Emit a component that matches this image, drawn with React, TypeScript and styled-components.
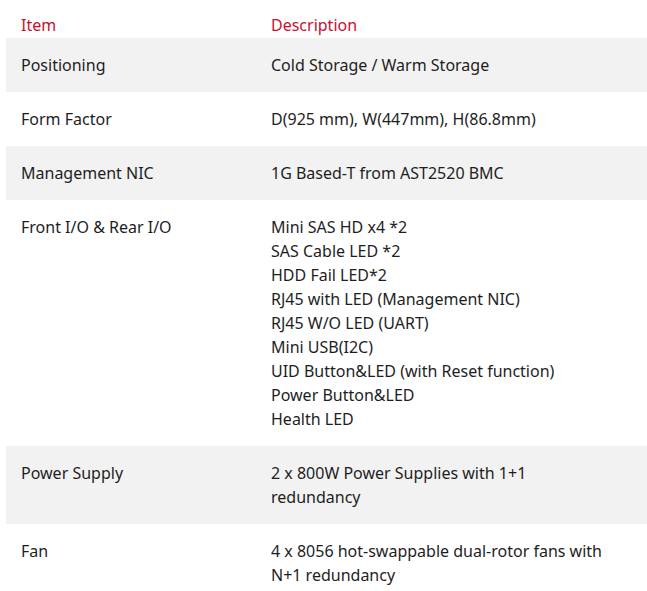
import React from "react";
import styled, { createGlobalStyle } from "styled-components";

const Global = createGlobalStyle`
  html, body { margin: 0; padding: 0; background: #fff; }
  body { font-family: "Noto Sans", "Open Sans", sans-serif; }
`;

const Wrap = styled.div`
  padding: 0 0 0 6px;
`;

const Table = styled.div`
  width: 641px;
  display: flex;
  flex-direction: column;
`;

const Row = styled.div<{ $shade?: boolean; $head?: boolean }>`
  display: grid;
  grid-template-columns: 250px 1fr;
  background: ${(p) => (p.$shade ? "#f2f2f2" : "#fff")};
  padding: ${(p) => (p.$head ? "13px 0 1px" : "15px 0")};
`;

const Cell = styled.div<{ $head?: boolean }>`
  padding: 0 15px;
  font-size: 16px;
  line-height: 24px;
  color: ${(p) => (p.$head ? "#c8102e" : "#1e1e1e")};
  letter-spacing: 0;
`;

const Line = styled.div``;

const rows: [string, string[]][] = [
  ["Positioning", ["Cold Storage / Warm Storage"]],
  ["Form Factor", ["D(925 mm), W(447mm), H(86.8mm)"]],
  ["Management NIC", ["1G Based-T from AST2520 BMC"]],
  [
    "Front I/O & Rear I/O",
    [
      "Mini SAS HD x4 *2",
      "SAS Cable LED *2",
      "HDD Fail LED*2",
      "RJ45 with LED (Management NIC)",
      "RJ45 W/O LED (UART)",
      "Mini USB(I2C)",
      "UID Button&LED (with Reset function)",
      "Power Button&LED",
      "Health LED",
    ],
  ],
  ["Power Supply", ["2 x 800W Power Supplies with 1+1", "redundancy"]],
  ["Fan", ["4 x 8056 hot-swappable dual-rotor fans with", "N+1 redundancy"]],
];

export default function App() {
  return (
    <Wrap>
      <Global />
      <Table>
        <Row $head>
          <Cell $head>Item</Cell>
          <Cell $head>Description</Cell>
        </Row>
        {rows.map(([k, v], i) => (
          <Row key={k} $shade={i % 2 === 0}>
            <Cell>{k}</Cell>
            <Cell>
              {v.map((l) => (
                <Line key={l}>{l}</Line>
              ))}
            </Cell>
          </Row>
        ))}
      </Table>
    </Wrap>
  );
}
